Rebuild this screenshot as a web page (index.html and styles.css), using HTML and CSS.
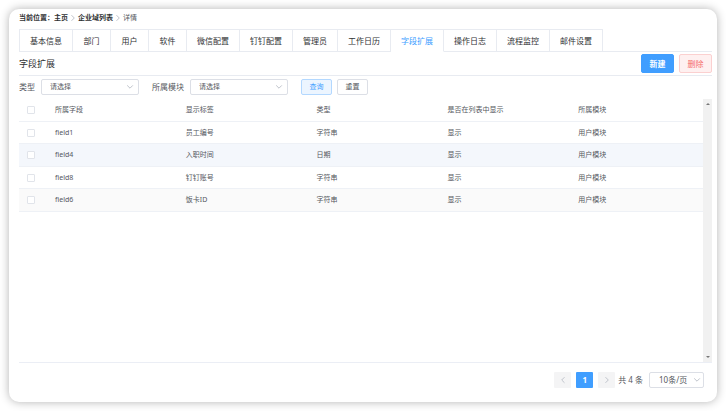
FILE: index.html
```
<!DOCTYPE html>
<html lang="zh-CN">
<head>
<meta charset="utf-8">
<meta name="viewport" content="width=device-width, initial-scale=1">
<title>字段扩展</title>
<link rel="stylesheet" href="styles.css">
</head>
<body>
<svg width="0" height="0" class="sprite" aria-hidden="true">
  <symbol id="right" viewBox="0 0 8 8"><path d="M2.5 1.2 5.3 4 2.5 6.8"/></symbol>
  <symbol id="left" viewBox="0 0 8 8"><path d="M5.5 1.2 2.7 4 5.5 6.8"/></symbol>
  <symbol id="down" viewBox="0 0 8 8"><path d="M1.2 2.4 4 5.2 6.8 2.4"/></symbol>
</svg>
<main class="card">
  <nav class="crumbs" aria-label="当前位置">
    <strong>当前位置：</strong>
    <a href="#">主页</a>
    <svg class="icon"><use href="#right"/></svg>
    <a href="#">企业域列表</a>
    <svg class="icon"><use href="#right"/></svg>
    <span>详情</span>
  </nav>
  <nav class="tabs">
    <a href="#">基本信息</a><a href="#">部门</a><a href="#">用户</a><a href="#">软件</a><a href="#">微信配置</a><a href="#">钉钉配置</a><a href="#">管理员</a><a href="#">工作日历</a><a href="#" class="active" aria-current="page">字段扩展</a><a href="#">操作日志</a><a href="#">流程监控</a><a href="#">邮件设置</a>
  </nav>
  <header class="heading">
    <h1>字段扩展</h1>
    <button class="btn primary" type="button">新建</button>
    <button class="btn danger" type="button">删除</button>
  </header>
  <form class="filters">
    <label for="type">类型</label>
    <div class="select">
      <select id="type"><option>请选择</option></select>
      <svg class="icon"><use href="#down"/></svg>
    </div>
    <label for="module">所属模块</label>
    <div class="select">
      <select id="module"><option>请选择</option></select>
      <svg class="icon"><use href="#down"/></svg>
    </div>
    <button class="btn small query" type="button">查询</button>
    <button class="btn small" type="reset">重置</button>
  </form>
  <section class="list">
    <div class="table-area">
      <table>
        <thead>
          <tr><th class="check"><input type="checkbox" aria-label="全选"></th><th>所属字段</th><th>显示标签</th><th>类型</th><th>是否在列表中显示</th><th>所属模块</th></tr>
        </thead>
        <tbody>
          <tr><td class="check"><input type="checkbox" aria-label="field1"></td><td>field1</td><td>员工编号</td><td>字符串</td><td>显示</td><td>用户模块</td></tr>
          <tr class="hover"><td class="check"><input type="checkbox" aria-label="field4"></td><td>field4</td><td>入职时间</td><td>日期</td><td>显示</td><td>用户模块</td></tr>
          <tr><td class="check"><input type="checkbox" aria-label="field8"></td><td>field8</td><td>钉钉账号</td><td>字符串</td><td>显示</td><td>用户模块</td></tr>
          <tr class="striped"><td class="check"><input type="checkbox" aria-label="field6"></td><td>field6</td><td>饭卡ID</td><td>字符串</td><td>显示</td><td>用户模块</td></tr>
        </tbody>
      </table>
    </div>
    <div class="scrollbar" aria-hidden="true"><i class="up"></i><i class="down"></i></div>
  </section>
  <footer class="pager">
    <button class="page" type="button" aria-label="上一页"><svg class="icon"><use href="#left"/></svg></button>
    <button class="page current" type="button">1</button>
    <button class="page" type="button" aria-label="下一页"><svg class="icon"><use href="#right"/></svg></button>
    <span class="total">共 4 条</span>
    <div class="select size">
      <select aria-label="每页条数"><option>10条/页</option></select>
      <svg class="icon"><use href="#down"/></svg>
    </div>
  </footer>
</main>
</body>
</html>
```
FILE: styles.css
```
* { box-sizing: border-box; }

body {
  margin: 0;
  padding: 9px;
  height: 100vh;
  background: #fff;
  color: #55585e;
  font: 7px/12px "Noto Sans", "Noto Sans CJK SC", sans-serif;
}

a { color: inherit; text-decoration: none; }
button, select, input { font: inherit; color: inherit; margin: 0; }
.sprite { position: absolute; }

.icon {
  width: 8px;
  height: 8px;
  flex: none;
  fill: none;
  stroke: #c0c4cc;
  stroke-width: 1;
}

.card {
  height: 100%;
  display: flex;
  flex-direction: column;
  padding: 0 5px 14px 10px;
  border-radius: 10px;
  background: #fff;
  box-shadow: 0 0 10px rgba(0, 0, 0, .3);
}

.crumbs {
  display: flex;
  align-items: center;
  height: 20px;
  padding-bottom: 2px;
}
.crumbs strong, .crumbs a { color: #303133; font-weight: 700; }
.crumbs .icon { margin: 0 1px; }

.tabs {
  display: flex;
  height: 23px;
  border-bottom: 1px solid #e8ebf1;
  color: #303133;
  font-size: 8px;
  line-height: 22px;
}
.tabs a {
  min-width: 38px;
  height: 23px;
  padding: 0 10px;
  border: 1px solid #e8ebf1;
  border-left: 0;
  text-align: center;
}
.tabs a:first-child { border-left: 1px solid #e8ebf1; }
.tabs .active { color: #409eff; border-bottom-color: #fff; }

.heading {
  display: flex;
  align-items: center;
  gap: 5px;
  height: 24px;
  border-bottom: 1px solid #e8ebf1;
}
h1 {
  flex: 1;
  margin: 0;
  color: #303133;
  font-size: 9px;
  font-weight: 400;
}

.btn {
  width: 33px;
  height: 19px;
  padding: 0;
  border: 1px solid #dcdfe6;
  border-radius: 2px;
  background: #fff;
  font-size: 8px;
}
.primary { background: #409eff; border-color: #409eff; color: #fff; font-weight: 700; }
.danger { background: #fef0f0; border-color: #fbd0d0; color: #f56c6c; }
.small { width: 31px; height: 16px; font-size: 7px; line-height: 12px; }
.query { margin-right: 5px; background: #ecf5ff; border-color: #b3d8ff; color: #409eff; }

.filters {
  display: flex;
  align-items: center;
  height: 23px;
  padding-bottom: 1px;
  font-size: 8px;
}
.select { position: relative; width: 98px; height: 16px; margin: 0 13px 0 6px; }
.select select {
  appearance: none;
  width: 100%;
  height: 100%;
  padding: 0 8px;
  border: 1px solid #dcdfe6;
  border-radius: 2px;
  background: #fff;
  font-size: 7px;
}
.select .icon { position: absolute; top: 4px; right: 5px; pointer-events: none; }

.list {
  flex: 1;
  min-height: 0;
  display: flex;
  border-bottom: 1px solid #ebeef5;
}
.table-area { flex: 1; }
table { width: 100%; table-layout: fixed; border-collapse: separate; border-spacing: 0; }
th, td {
  height: 22px;
  padding: 0 6px;
  border-bottom: 1px solid #eef1f6;
  font-weight: 400;
  text-align: left;
}
thead th, tbody tr:nth-child(even) td { height: 23px; }
.check { width: 30px; padding: 0 0 0 8px; }
.hover { background: #f4f7fc; }
.striped { background: #fafafa; }
input[type="checkbox"] {
  appearance: none;
  display: block;
  width: 8px;
  height: 8px;
  border: 1px solid #e1e4ea;
  border-radius: 1px;
  background: #fff;
}

.scrollbar {
  width: 9px;
  display: flex;
  flex-direction: column;
  justify-content: space-between;
  align-items: center;
  padding: 4px 0;
  background: #f1f1f1;
}
.scrollbar i { border: 2px solid transparent; }
.scrollbar .up { border-top: 0; border-bottom-color: #777; }
.scrollbar .down { border-bottom: 0; border-top-color: #777; }

.pager {
  display: flex;
  align-items: center;
  justify-content: flex-end;
  gap: 5px;
  padding: 9px 8px 0 0;
  font-size: 8px;
}
.page {
  display: grid;
  place-items: center;
  width: 17px;
  height: 16px;
  padding: 0;
  border: 0;
  border-radius: 1px;
  background: #f4f4f5;
}
.current { background: #409eff; color: #fff; font-weight: 700; }
.total { margin-left: -2px; }
.size { width: 55px; margin: 0 0 0 1px; }
.size select { font-size: 8px; padding: 0 9px; }
.size .icon { right: 3px; }
```
